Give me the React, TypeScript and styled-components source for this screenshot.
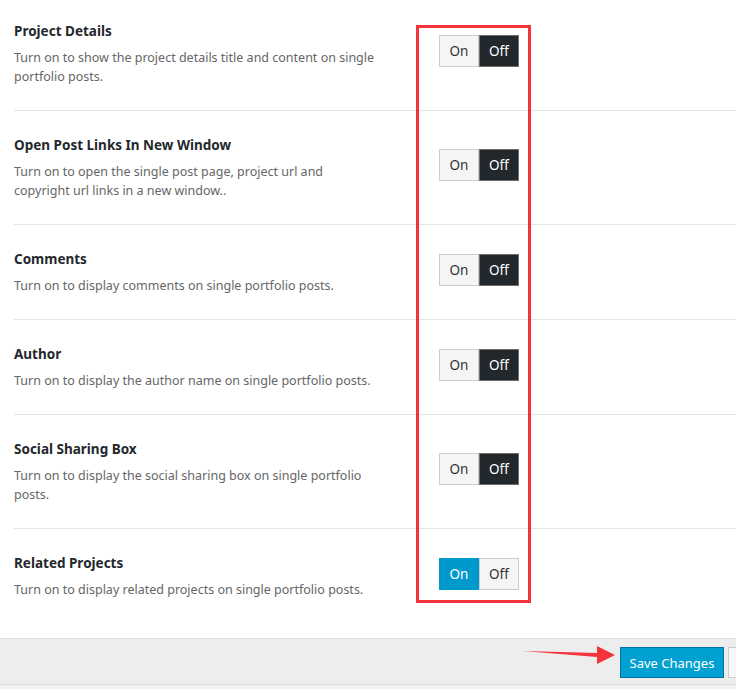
import * as React from "react";
import styled, { createGlobalStyle } from "styled-components";

const GlobalStyle = createGlobalStyle`
    html, body {
        margin: 0;
        padding: 0;
        background: #fff;
    }
    body {
        font-family: "Noto Sans", "Open Sans", sans-serif;
        font-size: 13px;
        color: #23282d;
    }
`;

const Page = styled.div`
    position: relative;
    width: 736px;
    height: 689px;
    overflow: hidden;
    background: #fff;
`;
const Options = styled.div`
    display: flex;
    flex-direction: column;
    padding-left: 14px;
`;
const Row = styled.div<{ $first?: boolean; $last?: boolean }>`
    display: grid;
    grid-template-columns: 425px auto;
    align-items: center;
    padding: ${p => (p.$first ? "22px" : "25px")} 0 ${p => (p.$last ? "39px" : "24px")};
    border-bottom: ${p => (p.$last ? "none" : "1px solid #e5e5e5")};
`;
const Text = styled.div`
    display: flex;
    flex-direction: column;
    gap: 7px;
`;
const Title = styled.div`
    font-weight: 700;
    font-size: 13.5px;
    line-height: 19px;
    color: #23282d;
`;
const Desc = styled.div`
    width: 367px;
    font-size: 12.5px;
    line-height: 19px;
    color: #666;
`;
const Toggle = styled.div`
    display: flex;
    width: 80px;
    height: 32px;
    margin-bottom: 6px;
`;
const ToggleHalf = styled.div<{ $active: boolean; $dark: boolean }>`
    flex: 1;
    display: flex;
    align-items: center;
    justify-content: center;
    box-sizing: border-box;
    font-size: 13.5px;
    background: ${p => (p.$active ? (p.$dark ? "#23282d" : "#0099cc") : "#f5f5f5")};
    color: ${p => (p.$active ? "#fff" : "#333")};
    border: 1px solid ${p => (p.$active ? (p.$dark ? "#6e6e6e" : "#0099cc") : "#cccccc")};
`;
const Footer = styled.div`
    display: flex;
    justify-content: flex-end;
    align-items: center;
    gap: 4px;
    height: 45px;
    border-top: 1px solid #dddddd;
    border-bottom: 1px solid #dddddd;
    background: #ededed;
`;
const SaveButton = styled.button`
    box-sizing: border-box;
    width: 104px;
    height: 31px;
    padding: 0;
    margin-top: 2px;
    background: #00a0d2;
    border: 1px solid #0073aa;
    color: #fff;
    font-family: "Noto Sans", "Open Sans", sans-serif;
    font-size: 13px;
`;
const GhostButton = styled.div`
    box-sizing: border-box;
    width: 8px;
    height: 31px;
    margin-top: 2px;
    background: #f7f7f7;
    border: 1px solid #cccccc;
    border-right: none;
`;
const Below = styled.div`
    height: 10px;
    background: #f1f1f1;
`;
const Highlight = styled.div`
    position: absolute;
    left: 416px;
    top: 25px;
    width: 115px;
    height: 578px;
    box-sizing: border-box;
    border: 3px solid #f5333a;
`;
const Arrow = styled.svg`
    position: absolute;
    left: 520px;
    top: 644px;
`;

interface OptionItem {
    title: string;
    desc: string;
    on: boolean;
}
const options: OptionItem[] = [
    {
        title: "Project Details",
        desc: "Turn on to show the project details title and content on single portfolio posts.",
        on: false,
    },
    {
        title: "Open Post Links In New Window",
        desc: "Turn on to open the single post page, project url and copyright url links in a new window..",
        on: false,
    },
    {
        title: "Comments",
        desc: "Turn on to display comments on single portfolio posts.",
        on: false,
    },
    {
        title: "Author",
        desc: "Turn on to display the author name on single portfolio posts.",
        on: false,
    },
    {
        title: "Social Sharing Box",
        desc: "Turn on to display the social sharing box on single portfolio posts.",
        on: false,
    },
    {
        title: "Related Projects",
        desc: "Turn on to display related projects on single portfolio posts.",
        on: true,
    },
];

const App = () => {
    return (
        <Page>
            <GlobalStyle />
            <Options>
                {options.map((opt, i) => (
                    <Row key={opt.title} $first={i === 0} $last={i === options.length - 1}>
                        <Text>
                            <Title>{opt.title}</Title>
                            <Desc>{opt.desc}</Desc>
                        </Text>
                        <Toggle>
                            <ToggleHalf $active={opt.on} $dark={false}>On</ToggleHalf>
                            <ToggleHalf $active={!opt.on} $dark={true}>Off</ToggleHalf>
                        </Toggle>
                    </Row>
                ))}
            </Options>
            <Footer>
                <SaveButton>Save Changes</SaveButton>
                <GhostButton />
            </Footer>
            <Below />
            <Highlight />
            <Arrow width="100" height="24" viewBox="0 0 100 24">
                <polygon points="3,7 77,9 77,2 95,11 77,20 77,13" fill="#f5333a" />
            </Arrow>
        </Page>
    );
};
export default App;
